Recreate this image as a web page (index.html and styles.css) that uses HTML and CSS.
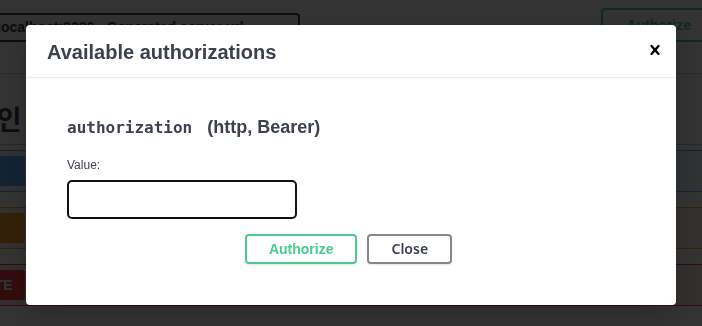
FILE: index.html
```html
<!DOCTYPE html>
<html lang="ko">
<head>
<meta charset="utf-8">
<title>Swagger UI</title>
<link rel="stylesheet" href="styles.css">
</head>
<body>
<div class="page">
  <div class="scheme">
    <div class="servers"><span class="select">localhost:8080 - Generated server url</span></div>
    <button class="auth-open">Authorize
      <svg width="20" height="20" viewBox="0 0 20 20"><path d="M15.8 8H14V5.6C14 2.703 12.665 1 10 1 7.334 1 6 2.703 6 5.6V6h2v-.801C8 3.754 8.797 3 10 3c1.203 0 2 .754 2 2.199V8H4c-.553 0-1 .646-1 1.199V17c0 .549.428 1.139.951 1.307l1.197.387C5.672 18.861 6.550 19 7.1 19h5.8c.549 0 1.428-.139 1.951-.307l1.196-.387c.524-.167.953-.757.953-1.306V9.199C17 8.646 16.352 8 15.800 8z"/></svg>
    </button>
  </div>
  <div class="wrapper">
    <h3 class="tag">로그인</h3>
    <div class="opblock get"><span class="badge">GET</span></div>
    <div class="opblock put"><span class="badge">PUT</span></div>
    <div class="opblock delete"><span class="badge">DELETE</span></div>
  </div>
</div>
<div class="backdrop"></div>
<div class="modal">
  <div class="modal-header">
    <h3 class="modal-title">Available authorizations</h3>
    <button class="close" aria-label="Close">
      <svg width="20" height="20" viewBox="0 0 20 20"><path d="M14.348 14.849a1.2 1.2 0 0 1-1.697 0L10 11.819l-2.651 3.029a1.2 1.2 0 1 1-1.697-1.697l2.758-3.15-2.759-3.152a1.2 1.2 0 1 1 1.697-1.697L10 8.183l2.651-3.031a1.2 1.2 0 1 1 1.697 1.697l-2.758 3.152 2.758 3.15a1.2 1.2 0 0 1 0 1.698z"/></svg>
    </button>
  </div>
  <div class="modal-body">
    <h4 class="auth-name"><code>authorization</code>(http, Bearer)</h4>
    <label class="value-label" for="tok">Value:</label>
    <input id="tok" class="value-input" type="text">
    <div class="btns">
      <button class="btn authorize">Authorize</button>
      <button class="btn done">Close</button>
    </div>
  </div>
</div>
</body>
</html>
```
FILE: styles.css
```css
* { box-sizing: border-box; }
html, body { margin: 0; height: 100%; }
body {
  background: #fff;
  font-family: "Liberation Sans", Arial, sans-serif;
  color: #3b4151;
  overflow: hidden;
}

/* underlying page */
.page { width: 807px; margin-left: -61px; }
.scheme {
  display: flex;
  justify-content: space-between;
  align-items: flex-end;
  padding: 8px 0 31px 46px;
  border-bottom: 1px solid rgba(0,0,0,.15);
}
.select {
  display: block;
  width: 315px;
  height: 29px;
  padding: 5px 10px;
  border: 2px solid #41444e;
  border-radius: 4px;
  background: #f7f7f7;
  font-size: 14px;
  font-weight: 700;
  line-height: 15px;
  white-space: nowrap;
  overflow: hidden;
  color: #3b4151;
}
.auth-open {
  display: flex;
  align-items: center;
  gap: 10px;
  height: 34px;
  padding: 5px 23px;
  border: 2px solid #49cc90;
  border-radius: 4px;
  background: transparent;
  color: #49cc90;
  font: 700 14px/20px "Liberation Sans", Arial, sans-serif;
}
.auth-open svg { fill: #49cc90; }

.tag {
  margin: 22px 0 5px;
  padding: 6px 10px 8px 8px;
  font: 700 27px/34px "Noto Sans CJK KR", sans-serif;
  color: #3b4151;
  border-bottom: 1px solid rgba(59,65,81,.3);
}
.opblock {
  margin: 0 0 15px;
  padding: 5px;
  border: 1px solid;
  border-radius: 4px;
}
.badge {
  display: block;
  width: 80px;
  padding: 6px 0;
  border-radius: 3px;
  font: 700 14px/18px "Liberation Sans", Arial, sans-serif;
  text-align: center;
  color: #fff;
}
.get { background: rgba(97,175,254,.1); border-color: #61affe; }
.get .badge { background: #61affe; }
.put { background: rgba(252,161,48,.1); border-color: #fca130; }
.put .badge { background: #fca130; }
.delete { background: rgba(249,62,62,.1); border-color: #f93e3e; }
.delete .badge { background: #f93e3e; }

/* dialog */
.backdrop {
  position: fixed;
  inset: 0;
  background: rgba(0,0,0,.8);
}
.modal {
  position: fixed;
  top: 25px;
  left: 26px;
  width: 650px;
  background: #fff;
  border-radius: 4px;
  box-shadow: 0 10px 30px 0 rgba(0,0,0,.2);
}
.modal-header {
  display: flex;
  align-items: center;
  justify-content: space-between;
  padding: 14px 11px 11px 21px;
  border-bottom: 1px solid #ebebeb;
}
.modal-title {
  margin: 0;
  font: 700 20px/27px "Liberation Sans", Arial, sans-serif;
  color: #3b4151;
}
.close {
  width: 20px;
  height: 20px;
  margin-top: -5px;
  padding: 0;
  border: 0;
  background: none;
}
.close svg { display: block; fill: #000; }

.modal-body { padding: 39px 41px 41px; }
.auth-name {
  margin: 0;
  font: 700 18px/20px "Liberation Sans", Arial, sans-serif;
  color: #3b4151;
}
.auth-name code {
  font-family: "DejaVu Sans Mono", monospace;
  font-weight: 700;
  font-size: 16px;
  margin-right: 15px;
}
.value-label {
  display: block;
  margin-top: 20px;
  font-size: 12px;
  line-height: 15px;
  color: #3b4151;
}
.value-input {
  display: block;
  margin-top: 7px;
  width: 230px;
  height: 39px;
  border: 2px solid #111;
  border-radius: 5px;
  background: #fff;
}
.btns {
  display: flex;
  justify-content: center;
  gap: 10px;
  margin-top: 15px;
  padding-right: 5px;
}
.btn {
  height: 30px;
  padding: 0 22px;
  border: 2px solid;
  border-radius: 4px;
  background: #fff;
  font: 700 14px/26px "Liberation Sans", Arial, sans-serif;
  box-shadow: 0 1px 2px rgba(0,0,0,.1);
}
.btn.authorize { color: #49cc90; border-color: #49cc90; }
.btn.done {
  padding: 0 22px;
  color: #3b4151;
  border-color: #888;
  font: 600 14px/26px "Noto Sans", "Liberation Sans", sans-serif;
}
```
